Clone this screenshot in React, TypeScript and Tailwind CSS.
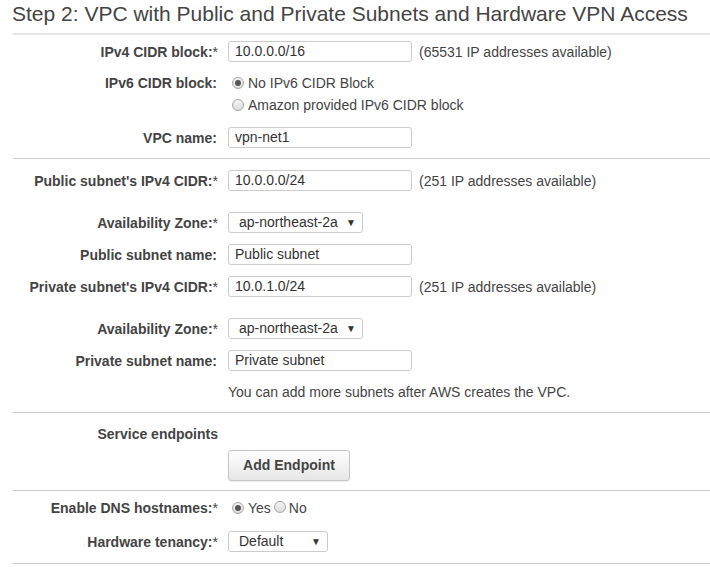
import React from "react";

const font = { fontFamily: '"Liberation Sans", Arial, sans-serif' };

function Label({ text, req }: { text: string; req?: boolean }) {
  return (
    <div className="text-right font-bold text-[14px] text-[#444] leading-[20px] whitespace-nowrap">
      {text}
      {req ? <span className="font-normal">*</span> : <span className="inline-block w-[1px]" />}
    </div>
  );
}

function TextBox({ value }: { value: string }) {
  return (
    <div className="w-[184px] h-[21px] border border-[#ccc] rounded-[3px] bg-white pl-[6px] text-[14px] leading-[19px] text-[#333]">
      {value}
    </div>
  );
}

function Select({ value, w }: { value: string; w: string }) {
  return (
    <div
      className={`${w} h-[21px] border border-[#ccc] rounded-[3px] bg-white flex items-center justify-between pl-[10px] pr-[6px] text-[14px] text-[#333]`}
    >
      <span className="leading-[19px]">{value}</span>
      <span className="text-[10px] text-[#333] leading-none">▼</span>
    </div>
  );
}

function Radio({ checked }: { checked?: boolean }) {
  return (
    <span className="inline-flex items-center justify-center w-[12px] h-[12px] rounded-full border border-[#a6a6a6] bg-gradient-to-b from-[#f4f4f4] to-[#dcdcdc] shrink-0">
      {checked ? <span className="w-[6px] h-[6px] rounded-full bg-[#555]" /> : null}
    </span>
  );
}

function Row({
  label,
  req,
  className,
  children,
}: {
  label: string;
  req?: boolean;
  className?: string;
  children: React.ReactNode;
}) {
  return (
    <div className={`grid grid-cols-[218px_1fr] gap-x-[10px] items-center ${className ?? ""}`}>
      <Label text={label} req={req} />
      <div className="flex items-center">{children}</div>
    </div>
  );
}

function Hint({ text }: { text: string }) {
  return <span className="ml-[7px] text-[14px] text-[#444] leading-[20px]">{text}</span>;
}

export default function App() {
  return (
    <div className="w-[710px] h-[567px] bg-white text-[#444] overflow-hidden" style={font}>
      <div className="pl-[12px]">
        <h2 className="text-[21px] leading-[24px] pt-[2px] h-[33px] text-[#444] whitespace-nowrap">
          Step 2: VPC with Public and Private Subnets and Hardware VPN Access
        </h2>
      </div>
      <div className="ml-[13px] border-t-2 border-[#e5e5e5]" />

      {/* VPC block */}
      <div className="pt-[6px] pb-[10px]">
        <Row label="IPv4 CIDR block:" req>
          <TextBox value="10.0.0.0/16" />
          <Hint text="(65531 IP addresses available)" />
        </Row>
        <div className="grid grid-cols-[218px_1fr] gap-x-[10px] mt-[10px]">
          <div className="h-[22px] flex items-center justify-end">
            <Label text="IPv6 CIDR block:" />
          </div>
          <div className="flex flex-col pl-[4px]">
            <label className="h-[22px] flex items-center gap-[4px] text-[14px] text-[#444]">
              <Radio checked />
              No IPv6 CIDR Block
            </label>
            <label className="h-[22px] flex items-center gap-[4px] text-[14px] text-[#444]">
              <Radio />
              Amazon provided IPv6 CIDR block
            </label>
          </div>
        </div>
        <Row label="VPC name:" className="mt-[11px]">
          <TextBox value="vpn-net1" />
        </Row>
      </div>
      <div className="ml-[13px] border-t border-[#ccc]" />

      {/* Subnets */}
      <div className="pt-[11px] pb-[10px]">
        <Row label="Public subnet's IPv4 CIDR:" req>
          <TextBox value="10.0.0.0/24" />
          <Hint text="(251 IP addresses available)" />
        </Row>
        <Row label="Availability Zone:" req className="mt-[21px]">
          <Select value="ap-northeast-2a" w="w-[135px]" />
        </Row>
        <Row label="Public subnet name:" className="mt-[11px]">
          <TextBox value="Public subnet" />
        </Row>
        <Row label="Private subnet's IPv4 CIDR:" req className="mt-[11px]">
          <TextBox value="10.0.1.0/24" />
          <Hint text="(251 IP addresses available)" />
        </Row>
        <Row label="Availability Zone:" req className="mt-[21px]">
          <Select value="ap-northeast-2a" w="w-[135px]" />
        </Row>
        <Row label="Private subnet name:" className="mt-[11px]">
          <TextBox value="Private subnet" />
        </Row>
        <div className="grid grid-cols-[218px_1fr] gap-x-[10px] mt-[11px]">
          <div />
          <div className="h-[20px] text-[14px] leading-[20px] text-[#444]">
            You can add more subnets after AWS creates the VPC.
          </div>
        </div>
      </div>
      <div className="ml-[13px] border-t border-[#ccc]" />

      {/* Endpoints */}
      <div className="pt-[11px] pb-[9px]">
        <div className="grid grid-cols-[218px_1fr] gap-x-[10px]">
          <div className="text-right font-bold text-[14px] text-[#444] leading-[20px]">Service endpoints</div>
          <div />
        </div>
        <div className="grid grid-cols-[218px_1fr] gap-x-[10px] mt-[6px]">
          <div />
          <div>
            <button className="w-[122px] h-[31px] border border-[#c6c6c6] rounded-[3px] bg-gradient-to-b from-[#ffffff] to-[#e6e6e6] font-bold text-[14px] text-[#444] shadow-[0_1px_1px_rgba(0,0,0,0.08)]">
              Add Endpoint
            </button>
          </div>
        </div>
      </div>
      <div className="ml-[13px] border-t border-[#ccc]" />

      {/* DNS and tenancy */}
      <div className="pt-[7px] pb-[11px]">
        <Row label="Enable DNS hostnames:" req>
          <div className="h-[20px] flex items-center pl-[4px] text-[14px] text-[#444]">
            <Radio checked />
            <span className="ml-[4px]">Yes</span>
            <span className="ml-[3px]">
              <Radio />
            </span>
            <span className="ml-[3px]">No</span>
          </div>
        </Row>
        <Row label="Hardware tenancy:" req className="mt-[13px]">
          <Select value="Default" w="w-[100px]" />
        </Row>
      </div>
      <div className="ml-[13px] border-t border-[#ccc]" />
    </div>
  );
}
